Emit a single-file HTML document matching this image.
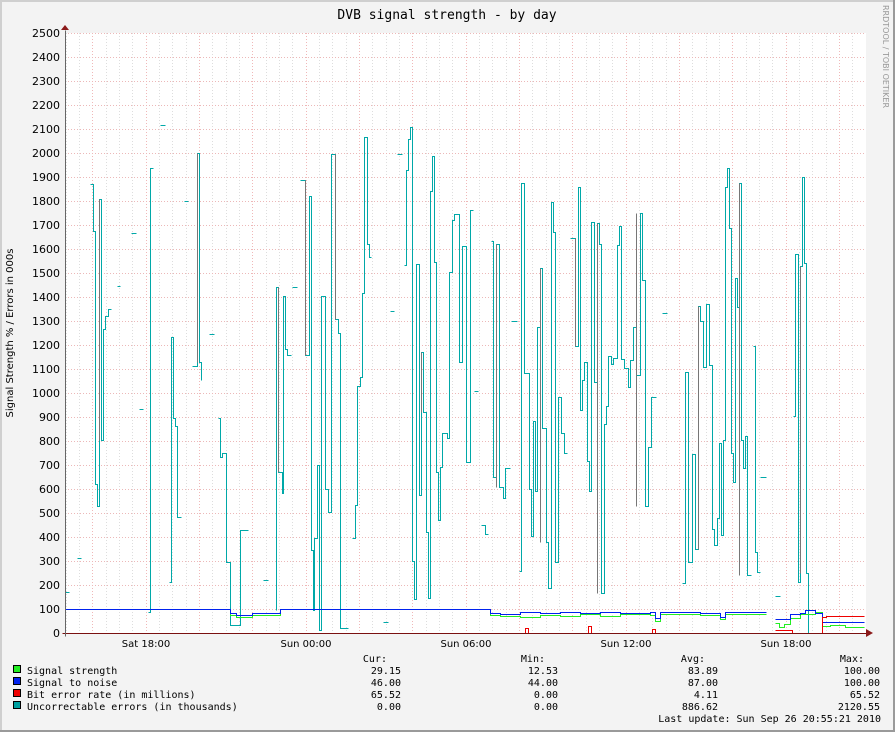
<!DOCTYPE html>
<html><head><meta charset="utf-8"><style>
html,body{margin:0;padding:0;background:#f3f3f3;}
svg{display:block;}
.t{font-family:"DejaVu Sans Mono","Liberation Mono",monospace;}
.s{font-family:"DejaVu Sans","Liberation Sans",sans-serif;}
</style></head><body>
<svg width="895" height="732" xmlns="http://www.w3.org/2000/svg">
<rect x="0" y="0" width="895" height="732" fill="#f3f3f3"/>
<rect x="0" y="0" width="895" height="2" fill="#cfcfcf"/>
<rect x="0" y="0" width="2" height="732" fill="#cfcfcf"/>
<rect x="893" y="0" width="2" height="732" fill="#9a9a9a"/>
<rect x="0" y="730" width="895" height="2" fill="#9a9a9a"/>
<rect x="65" y="33" width="801" height="600" fill="#fff"/>
<g id="grid" stroke-width="1" stroke-dasharray="1,2" shape-rendering="crispEdges"></g>
<text x="447" y="19" text-anchor="middle" class="t" font-size="13" fill="#000">DVB signal strength - by day</text>
<text transform="translate(883,5) rotate(90)" class="s" font-size="8" fill="#999">RRDTOOL / TOBI OETIKER</text>
<text transform="translate(13,333) rotate(-90)" text-anchor="middle" class="s" font-size="10" fill="#000">Signal Strength % / Errors in 000s</text>
<g id="ylab" class="s" font-size="11" fill="#000" text-anchor="end"></g>
<g class="s" font-size="10" fill="#000" text-anchor="middle">
<text x="146" y="647">Sat 18:00</text><text x="306" y="647">Sun 00:00</text><text x="466" y="647">Sun 06:00</text><text x="626" y="647">Sun 12:00</text><text x="786" y="647">Sun 18:00</text>
</g>
<g fill="none" stroke-width="1" transform="translate(0.5,0.5)">
<path stroke="#00a8a8" d="M65 592H69 M77 558H81 M90 184H93V231H95V484H97V506H99V199H101V440H103V329H105V316H108V309H111 M117 286H120 M131 233H136 M139 409H143 M148 612H150V168H153 M160 125H165 M169 582H171V337H173V418H175V426H177V517H181 M184 201H188 M192 366H197V153H199V362H201V380 M209 334H214 M218 418H220V457H222V453H226V562H230V625H240V530H248 M263 580H268 M276 610V287H278V472H282V493H283V296H285V349H287V355H291 M292 287H297 M300 180H305V355H309V196H311V550H313V610H314V538H317V465H319V630H321V296H325V489H328V512H331V154H335V319H338V333H340V628H348 M352 538H355V505H357V386H360V377H362V293H364V137H367V244H369V257H371 M383 622H388 M390 311H394 M397 154H402 M404 265H406V170H408V139H410V127H412V561H414V599H416V264H419V495H421V352H423V412H426V532H428V598H430V191H432V156H434V262H436V472H438V520H440V467H442V433H447V438H449V272H452V220H454V214H459V362H462V246H466V462H470V210H473 M474 391H478 M481 525H485V534H488 M491 241H493V477H496V244H499V487H503V498H505V468H510 M511 321H517 M519 571H521V183H524V373H529V489H531V536H533V421H535V491H537V327H540V268H542V428H546V542H548V588H551V202H553V232H555V562H558V397H561V433H564V453H567 M570 238H575V346H578V187H580V410H582V380H584V362H587V461H589V491H591V222H594V382H597V223H599V244H601V593H604V424H606V406H608V356H611V364H613V358H617V245H619V226H621V359H624V368H628V387H630V360H633V327H636V375H640V213H642V280H645V506H648V447H651V397H656 M662 313H667 M682 583H685V372H688V562H692V454H695V549H698V306H700V321H703V367H706V304H709V365H712V529H714V545H717V518H719V443H721V535H723V440H725V187H727V168H729V228H731V453H733V482H735V278H737V307H739V183H741V440H743V468H745V436H747V575H751 M753 346H755V552H757V572H760 M760 477H766 M775 596H780 M793 416H795V254H798V582H800V266H802V177H804V263H806V573H808V612V633"/>
<path stroke="#777" d="M99 199V440 M197 153V362 M278 287V472 M305 180V355 M335 154V319 M421 352V412 M496 244V487 M540 268V542 M575 238V346 M597 223V593 M636 213V506 M698 306V549 M739 183V575 M800 266V573"/>
<path stroke="#22ee22" d="M65 609H230V615H236V617H252V615H280V609H490V615H500V616H520V617H540V615H560V616H580V614H600V616H620V614H650V615H655V621H660V614H700V615H720V619H725V614H766 M775 623H779V627H784V624H790V618H800V614H815V612H822V626H830V625H845V627H864"/>
<path stroke="#0022ee" d="M65 609H230V613H236V615H252V613H280V609H490V613H500V614H520V612H540V613H560V612H580V613H600V612H620V613H650V612H655V618H660V612H700V613H720V617H725V612H766 M775 619H790V614H800V613H805V610H815V613H822V622H864"/>
<path stroke="#ee0000" d="M525 633V628H528V633 M588 633V626H591V633 M652 633V629H655V633 M775 630H792V633 M822 633V617H826V616H864"/>
<path stroke="#7a1010" d="M62 633H866"/>
<path stroke="#666" d="M65 30V636"/>
</g>
<polygon points="61,30 69,30 65,25" fill="#8b1a1a"/>
<polygon points="866,629 866,637 873,633" fill="#8b1a1a"/>
<g class="t" font-size="10" fill="#000">
<rect x="13.5" y="665.5" width="7" height="7" fill="#22ee22" stroke="#000"/>
<rect x="13.5" y="677.5" width="7" height="7" fill="#0022ee" stroke="#000"/>
<rect x="13.5" y="689.5" width="7" height="7" fill="#ee0000" stroke="#000"/>
<rect x="13.5" y="701.5" width="7" height="7" fill="#00a0a0" stroke="#000"/>
<text x="27" y="674">Signal strength</text>
<text x="27" y="686">Signal to noise</text>
<text x="27" y="698">Bit error rate (in millions)</text>
<text x="27" y="710">Uncorrectable errors (in thousands)</text>
<g text-anchor="end">
<text x="387" y="662">Cur:</text><text x="545" y="662">Min:</text><text x="705" y="662">Avg:</text><text x="864" y="662">Max:</text>
<text x="401" y="674">29.15</text><text x="401" y="686">46.00</text><text x="401" y="698">65.52</text><text x="401" y="710">0.00</text>
<text x="558" y="674">12.53</text><text x="558" y="686">44.00</text><text x="558" y="698">0.00</text><text x="558" y="710">0.00</text>
<text x="718" y="674">83.89</text><text x="718" y="686">87.00</text><text x="718" y="698">4.11</text><text x="718" y="710">886.62</text>
<text x="880" y="674">100.00</text><text x="880" y="686">100.00</text><text x="880" y="698">65.52</text><text x="880" y="710">2120.55</text>
<text x="881" y="722">Last update: Sun Sep 26 20:55:21 2010</text>
</g>
</g>
<script>
(function(){
var ns="http://www.w3.org/2000/svg",g=document.getElementById("grid"),yl=document.getElementById("ylab");
function ln(x1,y1,x2,y2,c){var l=document.createElementNS(ns,"line");l.setAttribute("x1",x1);l.setAttribute("y1",y1);l.setAttribute("x2",x2);l.setAttribute("y2",y2);l.setAttribute("stroke",c);g.appendChild(l);}
for(var k=0;k<=60;k++){var x=Math.round(65.6+13.333*k)+0.5;if(x>866)break;var red=((k-2)%4==0);ln(x,33,x,633,red?"#f0b8b8":"#dddddd");}
for(var v=1;v<=25;v++){var y=633-24*v+0.5;ln(65,y,866,y,"#ecb8b8");}
for(var v=0;v<=25;v++){var t=document.createElementNS(ns,"text");t.setAttribute("x",60);t.setAttribute("y",633-24*v+4);t.textContent=String(v*100);yl.appendChild(t);}
})();
</script>
</svg>
</body></html>
